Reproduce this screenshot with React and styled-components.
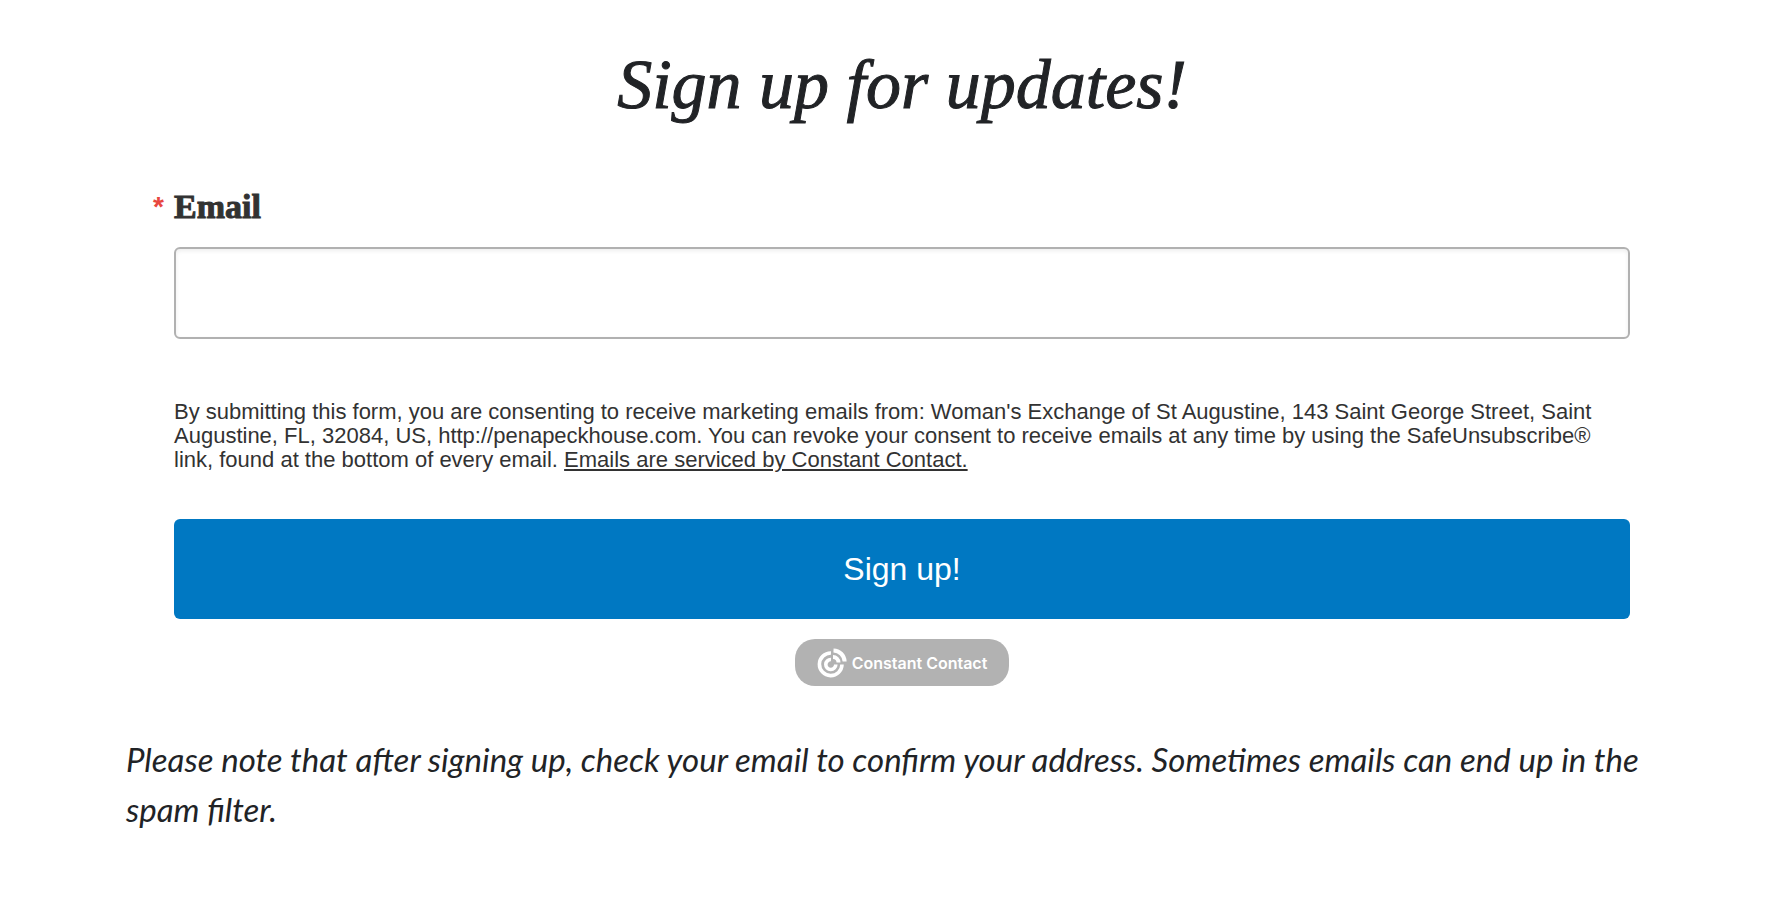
import styled, { createGlobalStyle } from "styled-components";

function App() {
  return (
    <Page>
      <GlobalStyle />
      <Title>Sign up for updates!</Title>
      <Form onSubmit={(e) => e.preventDefault()}>
        <Label htmlFor="email">
          <Required>*</Required>Email
        </Label>
        <Input id="email" type="email" name="email" required />
        <Consent>
          By submitting this form, you are consenting to receive marketing
          emails from: Woman's Exchange of St Augustine, 143 Saint George
          Street, Saint Augustine, FL, 32084, US, http://penapeckhouse.com. You
          can revoke your consent to receive emails at any time by using the
          SafeUnsubscribe® link, found at the bottom of every email.{" "}
          <a href="#about">Emails are serviced by Constant Contact.</a>
        </Consent>
        <Submit type="submit">Sign up!</Submit>
        <Badge href="#constant-contact">
          <Logo />
          Constant Contact
        </Badge>
      </Form>
      <Note>
        Please note that after signing up, check your email to confirm your
        address. Sometimes emails can end up in the spam filter.
      </Note>
    </Page>
  );
}

function Logo() {
  return (
    <svg width="30" height="30" viewBox="0 0 30 30" fill="none" stroke="#fff">
      <path d="M14 5A11.3 11.3 0 1 0 25 16.5" strokeWidth="3.6" />
      <path d="M14 11.5A5 5 0 1 0 18.8 16.5" strokeWidth="3.6" />
      <path d="M16.5 2.4A11.5 11.5 0 0 1 27.6 13.5" strokeWidth="4" />
      <path d="M16 9A5.5 5.5 0 0 1 21.5 14.5" strokeWidth="4" />
    </svg>
  );
}

const GlobalStyle = createGlobalStyle`
  * {
    box-sizing: border-box;
  }

  body {
    margin: 0;
    background: #fff;
  }
`;

const Page = styled.main`
  padding: 45px 126px;
`;

const Title = styled.h1`
  margin: 0;
  padding-left: 16px;
  text-align: center;
  font: italic 400 70px/80px "Liberation Serif", serif;
  -webkit-text-stroke: 1px #212326;
  color: #212326;
`;

const Form = styled.form`
  display: flex;
  flex-direction: column;
  padding: 64px 32px 0 48px;
`;

const Label = styled.label`
  display: flex;
  margin-left: -21px;
  font: 700 34px/36px "Liberation Serif", serif;
  -webkit-text-stroke: 1px #323232;
  color: #323232;
`;

const Required = styled.span`
  width: 21px;
  font: 700 28px/36px "Liberation Sans", sans-serif;
  -webkit-text-stroke: 0;
  color: #e8473f;
`;

const Input = styled.input`
  height: 92px;
  margin-top: 22px;
  padding: 0 20px;
  border: 2px solid #b1b1b1;
  border-radius: 6px;
  box-shadow: inset 0 2px 4px #eee;
  font: 32px "Liberation Sans", sans-serif;
`;

const Consent = styled.p`
  margin: 61px 0 0;
  font: 22px/24px "Liberation Sans", sans-serif;
  color: #323232;

  a {
    color: inherit;
    text-decoration-thickness: 2px;
    text-underline-offset: 2px;
  }
`;

const Submit = styled.button`
  height: 100px;
  margin-top: 47px;
  border: 0;
  border-radius: 6px;
  background: #0078c2;
  color: #fff;
  font: 32px "Liberation Sans", sans-serif;
  cursor: pointer;
`;

const Badge = styled.a`
  display: flex;
  align-items: center;
  align-self: center;
  gap: 5px;
  height: 47px;
  margin-top: 20px;
  padding: 0 22px;
  border-radius: 20px;
  background: #b2b2b2;
  color: #fff;
  font: 600 16px/24px Inter, sans-serif;
  text-decoration: none;
`;

const Note = styled.p`
  margin: 48px 0 0;
  font: italic 400 33px/50px Lato, sans-serif;
  color: #212326;
`;

export default App;
